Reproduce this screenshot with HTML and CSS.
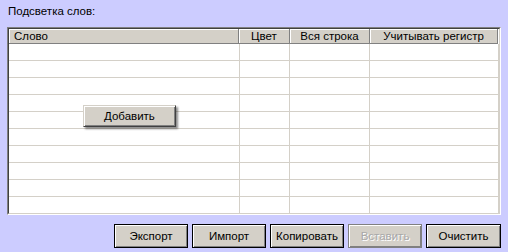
FILE: index.html
```html
<!DOCTYPE html>
<html lang="ru">
<head>
    <meta charset="UTF-8">
    <title>Подсветка слов</title>
    <link rel="stylesheet" href="styles.css">
</head>
<body>
    <div class="title">Подсветка слов:</div>

    <div class="grid-outer">
        <div class="grid-inner">
            <div class="grid-head">
                <div class="hcell left">Слово</div>
                <div class="hcell">Цвет</div>
                <div class="hcell">Вся строка</div>
                <div class="hcell">Учитывать регистр</div>
            </div>
            <div class="grid-body">
                <div class="row"><div class="cell"></div><div class="cell"></div><div class="cell"></div><div class="cell"></div></div>
                <div class="row"><div class="cell"></div><div class="cell"></div><div class="cell"></div><div class="cell"></div></div>
                <div class="row"><div class="cell"></div><div class="cell"></div><div class="cell"></div><div class="cell"></div></div>
                <div class="row"><div class="cell"></div><div class="cell"></div><div class="cell"></div><div class="cell"></div></div>
                <div class="row"><div class="cell"></div><div class="cell"></div><div class="cell"></div><div class="cell"></div></div>
                <div class="row"><div class="cell"></div><div class="cell"></div><div class="cell"></div><div class="cell"></div></div>
                <div class="row"><div class="cell"></div><div class="cell"></div><div class="cell"></div><div class="cell"></div></div>
                <div class="row"><div class="cell"></div><div class="cell"></div><div class="cell"></div><div class="cell"></div></div>
                <div class="row"><div class="cell"></div><div class="cell"></div><div class="cell"></div><div class="cell"></div></div>
                <div class="row"><div class="cell"></div><div class="cell"></div><div class="cell"></div><div class="cell"></div></div>
            </div>
        </div>
    </div>

    <div class="popup-menu">
        <div class="menu-item">Добавить</div>
    </div>

    <div class="buttons">
        <button class="btn">Экспорт</button>
        <button class="btn">Импорт</button>
        <button class="btn">Копировать</button>
        <button class="btn" disabled>Вставить</button>
        <button class="btn">Очистить</button>
    </div>
</body>
</html>
```

FILE: styles.css
```css
body {
    margin: 0;
    background-color: #ccccff;
    font-family: "Liberation Sans", Arial, sans-serif;
    font-size: 11.5px;
    color: #000;
    position: relative;
    height: 252px;
    overflow: hidden;
}
.title { padding: 4px 0 0 8px; height: 14px; line-height: 14px; }

.grid-outer {
    margin: 9px 0 0 7px;
    width: 492px;
    border: 1px solid;
    border-color: #808080 #ffffff #ffffff #808080;
}
.grid-inner {
    border: 1px solid;
    border-color: #404040 #d4d0c8 #d4d0c8 #404040;
    background-color: #fff;
    height: 184px;
    overflow: hidden;
}
.grid-head {
    display: grid;
    grid-template-columns: 230px 51px 80px 128px;
    height: 15px;
}
.hcell {
    background-color: #d4d0c8;
    border-right: 1px solid #808080;
    border-bottom: 1px solid #808080;
    box-shadow: inset 1px 1px #fff;
    text-align: center;
    line-height: 14px;
    white-space: nowrap;
}
.hcell.left { text-align: left; padding-left: 5px; }

.row {
    display: grid;
    grid-template-columns: 231px 50px 80px 1fr;
    height: 17px;
}
.cell {
    border-right: 1px solid #d4d0c8;
    border-bottom: 1px solid #d4d0c8;
}

.popup-menu {
    position: absolute;
    left: 83px;
    top: 105px;
    width: 91px;
    height: 20px;
    background-color: #d4d0c8;
    border: 1px solid;
    border-color: #d4d0c8 #404040 #404040 #d4d0c8;
    box-shadow: inset 1px 1px #fff, inset -1px -1px #808080, 2px 2px 2px rgba(0, 0, 0, 0.45);
}
.menu-item { padding-left: 20px; line-height: 20px; }

.buttons {
    display: flex;
    justify-content: flex-end;
    gap: 4px;
    width: 494px;
    margin: 9px 0 0 7px;
}
.btn {
    width: 74px;
    height: 24px;
    padding: 0;
    font-family: "Liberation Sans", Arial, sans-serif;
    font-size: 11.5px;
    color: #000;
    background-color: #d4d0c8;
    border: 1px solid #000;
    border-radius: 0;
    box-shadow: inset 1px 1px #fff, inset -1px -1px #808080;
}
.btn:last-child { width: 75px; }
.btn:disabled {
    color: #a8a8a8;
    text-shadow: 1px 1px #fff;
    border-color: #808080;
}
```
